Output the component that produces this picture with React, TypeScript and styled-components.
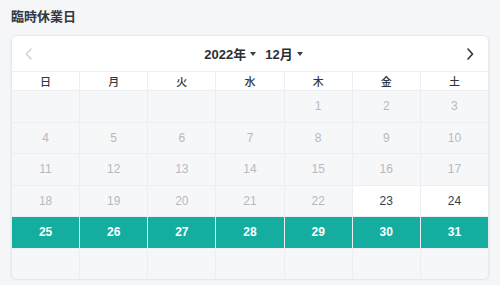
import styled, { createGlobalStyle } from 'styled-components';

const GlobalStyle = createGlobalStyle`
  html, body {
    margin: 0;
    padding: 0;
    background: #f5f6f8;
    font-family: "Liberation Sans", "Noto Sans CJK JP", sans-serif;
  }
`;

const Page = styled.div`
  padding: 7px 11px 0 11px;
`;

const Title = styled.h2`
  margin: 0;
  font-size: 13px;
  line-height: 20px;
  font-weight: 700;
  color: #333840;
`;

const Card = styled.div`
  margin-top: 8px;
  background: #fff;
  border: 1px solid #e6e8ec;
  border-radius: 6px;
  box-shadow: 0 1px 3px rgba(0, 0, 0, 0.06);
  overflow: hidden;
`;

const Header = styled.div`
  height: 35px;
  display: flex;
  align-items: center;
  justify-content: space-between;
  padding: 0 10px 0 9px;
  border-bottom: 1px solid #eceef1;
`;

const NavButton = styled.button<{ $muted?: boolean }>`
  width: 16px;
  height: 16px;
  padding: 0;
  border: 0;
  background: none;
  display: flex;
  align-items: center;
  justify-content: center;
  color: ${(p) => (p.$muted ? '#d0d3d8' : '#2f3338')};
`;

const Selectors = styled.div`
  display: flex;
  align-items: center;
  gap: 9px;
  margin-left: 8px;
`;

const Select = styled.span`
  display: flex;
  align-items: center;
  gap: 4px;
  font-size: 13px;
  font-weight: 700;
  color: #2b2f35;
`;

const Caret = styled.span`
  width: 0;
  height: 0;
  border-left: 3px solid transparent;
  border-right: 3px solid transparent;
  border-top: 4px solid #3a3e44;
  margin-top: 1px;
`;

const Grid = styled.div`
  display: grid;
  grid-template-columns: repeat(7, 1fr);
  gap: 1px;
  background: #eceef1;
`;

const WeekHead = styled.div`
  height: 18px;
  display: flex;
  align-items: center;
  justify-content: center;
  background: #fff;
  font-size: 11px;
  font-weight: 500;
  color: #33373d;
`;

type Kind = 'empty' | 'past' | 'open' | 'holiday';

const Day = styled.div<{ $kind: Kind }>`
  height: 30.5px;
  display: flex;
  align-items: center;
  justify-content: center;
  font-size: 12px;
  font-weight: ${(p) => (p.$kind === 'holiday' ? 700 : 400)};
  background: ${(p) =>
    p.$kind === 'holiday' ? '#14ada0' : p.$kind === 'open' ? '#ffffff' : '#f6f7f9'};
  color: ${(p) =>
    p.$kind === 'holiday' ? '#ffffff' : p.$kind === 'open' ? '#3a3e44' : '#b6b9bf'};
`;

const weekdays = ['日', '月', '火', '水', '木', '金', '土'];

const Chevron = ({ dir }: { dir: 'left' | 'right' }) => (
  <svg width="8" height="12" viewBox="0 0 8 12" fill="none">
    <path
      d={dir === 'left' ? 'M6 1 L1.5 6 L6 11' : 'M2 1 L6.5 6 L2 11'}
      stroke="currentColor"
      strokeWidth="1.6"
      strokeLinecap="round"
      strokeLinejoin="round"
    />
  </svg>
);

const kindOf = (d: number): Kind => {
  if (d >= 25) return 'holiday';
  if (d >= 23) return 'open';
  return 'past';
};

const App = () => {
  const cells: (number | null)[] = [];
  for (let i = 0; i < 4; i++) cells.push(null);
  for (let d = 1; d <= 31; d++) cells.push(d);
  while (cells.length < 42) cells.push(null);

  return (
    <>
      <GlobalStyle />
      <Page>
        <Title>臨時休業日</Title>
        <Card>
          <Header>
            <NavButton $muted>
              <Chevron dir="left" />
            </NavButton>
            <Selectors>
              <Select>
                2022年 <Caret />
              </Select>
              <Select>
                12月 <Caret />
              </Select>
            </Selectors>
            <NavButton>
              <Chevron dir="right" />
            </NavButton>
          </Header>
          <Grid>
            {weekdays.map((w) => (
              <WeekHead key={w}>{w}</WeekHead>
            ))}
            {cells.map((d, i) => (
              <Day key={i} $kind={d === null ? 'empty' : kindOf(d)}>
                {d}
              </Day>
            ))}
          </Grid>
        </Card>
      </Page>
    </>
  );
};

export default App;
